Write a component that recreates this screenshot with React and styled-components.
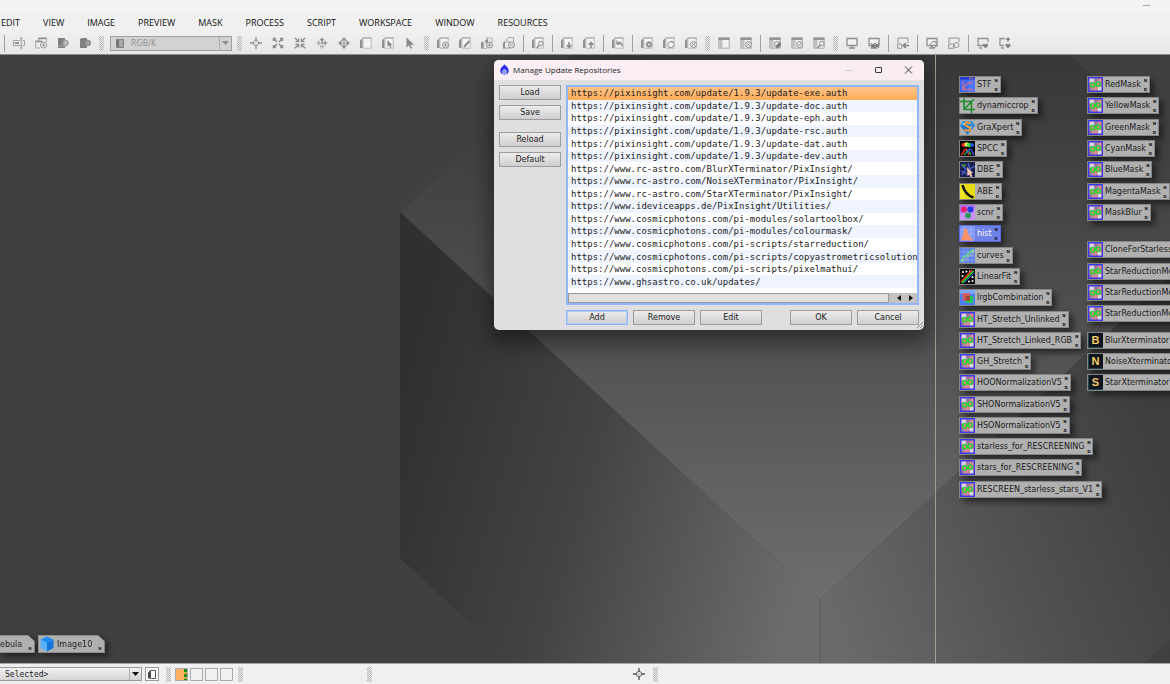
import React, { useState } from "react";
import styled, { createGlobalStyle, css } from "styled-components";

const GlobalStyle = createGlobalStyle`
  * {
    box-sizing: border-box;
  }

  html,
  body,
  #root {
    height: 100%;
    margin: 0;
  }

  body {
    font-family: "DejaVu Sans", Verdana, sans-serif;
    font-size: 8px;
    color: #1c1c1c;
    overflow: hidden;
  }

  button,
  select {
    font: inherit;
    color: inherit;
  }
`;

const AppShell = styled.div`
  display: flex;
  flex-direction: column;
  height: 100vh;
  background: #f0f0f0;
`;

const TitleStrip = styled.header`
  display: flex;
  justify-content: flex-end;
  height: 14px;
  padding-right: 18px;
  background: #f3f3f3;
`;

const MinimizeButton = styled.button`
  width: 12px;
  height: 12px;
  padding: 0;
  border: 0;
  background: none;

  svg {
    display: block;
  }
`;

const MenuBar = styled.nav`
  display: flex;
  align-items: center;
  gap: 23px;
  height: 18px;
  padding: 0 0 2px 1px;
  font-family: "Open Sans", "Segoe UI", sans-serif;
  font-size: 9px;
`;

const MenuButton = styled.button`
  padding: 0;
  border: 0;
  background: none;
  color: #111;
`;

const Toolbar = styled.div`
  display: flex;
  align-items: center;
  height: 23px;
  padding-left: 1px;
  border-bottom: 1px solid #8c8c8c;
  background: linear-gradient(#f0f0f0, #e6e6e6);
`;

const ToolButton = styled.button`
  display: flex;
  flex: none;
  align-items: center;
  justify-content: center;
  width: 22px;
  height: 18px;
  padding: 0;
  border: 0;
  background: none;
`;

const Divider = styled.span`
  flex: none;
  width: 1px;
  height: 17px;
  margin: 0 3px;
  background: #a2a2a2;
`;

const Handle = styled.span`
  flex: none;
  width: 5px;
  height: 15px;
  margin: 0 3px;
  background: repeating-conic-gradient(#b4b4b4 0 25%, #f0f0f0 0 50%) 0 0 / 2px 2px;
`;

const ChannelPicker = styled.label`
  display: flex;
  flex: none;
  align-items: center;
  gap: 7px;
  width: 122px;
  height: 15px;
  margin: 0 2px 0 3px;
  padding-left: 5px;
  border: 1px solid #a0a0a0;
  background: #d2d2d2;

  select {
    flex: 1;
    height: 13px;
    padding: 0;
    border: 0;
    appearance: none;
    background: none;
    color: #959595;
    opacity: 1;
  }
`;

const DropArrow = styled.span`
  display: flex;
  align-items: center;
  justify-content: center;
  width: 12px;
  height: 100%;
  border-left: 1px solid #b0b0b0;
  pointer-events: none;
`;

const Workspace = styled.main`
  position: relative;
  flex: 1;
  min-height: 0;
  overflow: hidden;
  background: #404040;
`;

const Backdrop = styled.svg`
  position: absolute;
  top: 0;
  left: 0;
`;

const ScreenEdge = styled.div`
  position: absolute;
  top: 0;
  bottom: 0;
  left: 935px;
  width: 1px;
  background: #a89c90;
`;

const ProcessIcon = styled.button`
  position: absolute;
  left: ${({ $x }) => $x}px;
  top: ${({ $y }) => $y}px;
  display: flex;
  align-items: center;
  gap: 2px;
  height: 17px;
  padding: 0 1px 0 0;
  border: 1px solid #868686;
  background: #b0b0b0;
  color: #1a1a1a;
  white-space: nowrap;
  box-shadow: 4px 4px 6px rgba(0, 0, 0, 0.5);

  > svg {
    flex: none;
  }

  ${({ $selected }) =>
    $selected &&
    css`
      border-color: #5a6ad8;
      background: #6f80e6;
      color: #fff;
    `}
`;

const Flags = styled.span`
  display: flex;
  flex-direction: column;
  justify-content: space-between;
  width: 5px;
  height: 14px;
  font-size: 4px;
  font-weight: bold;
  line-height: 5px;
  text-align: center;
  color: #111;
`;

const ImageIconShadow = styled.div`
  position: absolute;
  left: ${({ $x }) => $x}px;
  bottom: 10px;
  filter: drop-shadow(3px 3px 3px rgba(0, 0, 0, 0.5));
`;

const ImageIcon = styled.button`
  display: flex;
  align-items: center;
  gap: 3px;
  height: 18px;
  padding: 0 2px 0 ${({ $cut }) => ($cut ? 0 : 1)}px;
  border: 1px solid #8e8e8e;
  border-left-width: ${({ $cut }) => ($cut ? 0 : 1)}px;
  background: #b0b0b0;
  clip-path: polygon(0 0, calc(100% - 7px) 0, 100% 6px, 100% 100%, 0 100%);

  small {
    align-self: flex-end;
    margin-left: 3px;
    font-size: 4px;
    font-weight: bold;
    line-height: 6px;
  }
`;

const Dialog = styled.section`
  position: absolute;
  left: 494px;
  top: 5px;
  width: 430px;
  border-radius: 5px;
  overflow: hidden;
  background: #dfdfe1;
`;

const DialogShadow = styled(Dialog)`
  height: 270px;
  box-shadow: 0 10px 20px 4px rgba(0, 0, 0, 0.4);
`;

const DialogHeader = styled.header`
  display: flex;
  align-items: center;
  height: 20px;
  padding: 0 9px 1px 5px;
  background: linear-gradient(90deg, #fbeff5, #f9edf3);

  h1 {
    flex: 1;
    margin: 0 0 0 3px;
    font-family: "Open Sans", "Segoe UI", sans-serif;
    font-size: 8px;
    font-weight: normal;
    line-height: 10px;
  }
`;

const WindowControls = styled.div`
  display: flex;
  gap: 18px;

  button {
    width: 12px;
    height: 12px;
    padding: 0;
    border: 0;
    background: none;
  }

  svg {
    display: block;
  }
`;

const DialogBody = styled.div`
  display: flex;
  gap: 5px;
  padding: 5px 5px 4px;
`;

const SideButtons = styled.div`
  display: flex;
  flex: none;
  flex-direction: column;
  gap: 5px;
  width: 62px;
`;

const MainColumn = styled.div`
  display: flex;
  flex: 1;
  flex-direction: column;
  gap: 5px;
  min-width: 0;
`;

const PushButton = styled.button`
  width: 62px;
  height: 15px;
  margin-top: ${({ $spaced }) => ($spaced ? 7 : 0)}px;
  padding: 0;
  border: 1px solid ${({ $primary }) => ($primary ? "#8fb4f8" : "#9c9c9e")};
  background: linear-gradient(#ececec, #cfcfcf);
  line-height: 12px;
  box-shadow: ${({ $primary }) => ($primary ? "inset 0 0 0 1px #b4ccf8" : "none")};
`;

const ButtonRow = styled.div`
  display: flex;
  gap: 5px;
`;

const Spacer = styled.span`
  flex: 1;
`;

const ListPanel = styled.div`
  display: flex;
  flex-direction: column;
  height: 220px;
  border: 2px solid #92b6fa;
  background: #fff;
`;

const RepoList = styled.ul`
  display: flex;
  flex: 1;
  flex-direction: column;
  min-height: 0;
  margin: 0;
  padding: 0 0 5px;
  overflow: hidden;
  list-style: none;
  font-family: "DejaVu Sans Mono", monospace;
  font-size: 9px;
  line-height: 12px;
`;

const RepoItem = styled.li`
  display: flex;
  flex: 1;
  align-items: center;
  padding-left: 3px;
  white-space: nowrap;
  cursor: default;

  &:nth-child(even) {
    background: #eff4fe;
  }

  ${({ $selected }) =>
    $selected &&
    css`
      background: linear-gradient(#ffc488, #ffac58);
    `}
`;

const ScrollTrack = styled.div`
  display: flex;
  align-items: center;
  height: 10px;
  padding-right: 1px;
  background: #c2c2c2;
`;

const ScrollThumb = styled.span`
  flex: 1;
  height: 10px;
  margin-right: 5px;
  border: 1px solid #989898;
  background: #e0e0e0;
`;

const ScrollButton = styled.button`
  width: 11px;
  height: 10px;
  padding: 0;
  border: 0;
  background: none;

  svg {
    display: block;
    margin: auto;
  }
`;

const ResizeGrip = styled.svg`
  position: absolute;
  right: 1px;
  bottom: 1px;
`;

const StatusBar = styled.footer`
  display: flex;
  align-items: center;
  height: 21px;
  border-top: 1px solid #a8a8a8;
  background: #f0f0f0;
`;

const ViewPicker = styled.label`
  display: flex;
  align-items: center;
  width: 142px;
  height: 14px;
  border: 1px solid #9a9a9a;
  border-left: 0;
  background: linear-gradient(#f2f2f2, #d4d4d4);

  select {
    flex: 1;
    height: 12px;
    padding: 0 0 0 5px;
    border: 0;
    appearance: none;
    background: none;
    font-family: "DejaVu Sans Mono", monospace;
    font-size: 8px;
  }
`;

const PageButton = styled.button`
  display: flex;
  align-items: center;
  justify-content: center;
  width: 14px;
  height: 14px;
  margin: 0 4px 0 3px;
  padding: 0;
  border: 1px solid #9a9a9a;
  background: #fafafa;
`;

const Swatches = styled.div`
  display: flex;
  gap: 2px;
  margin: 0 2px 0 1px;
`;

const Swatch = styled.button`
  width: 13px;
  height: 13px;
  padding: 0;
  border: 1px solid #aaa;
  background: #f0f0f0;

  ${({ $active }) =>
    $active &&
    css`
      background: repeating-linear-gradient(#148c14 0 3px, #d8b040 3px 5px)
          right / 3px 100% no-repeat,
        #ffb060;
    `}
`;

const StatusGap = styled.div`
  width: ${({ $width }) => $width}px;
`;

const menus = [
  "EDIT",
  "VIEW",
  "IMAGE",
  "PREVIEW",
  "MASK",
  "PROCESS",
  "SCRIPT",
  "WORKSPACE",
  "WINDOW",
  "RESOURCES",
];

// "|" is a divider and ":" is a drag handle
const leftTools = ["|", "rename", "newWindow", "readout", "readoutAll", ":"];
const mainTools = [
  ":", "center", "expand", "shrink", "fitIn", "pan", "page", "pagePick", "pointer",
  ":", "page+add", "page+edit", "page2+add", "page2+minus",
  "|", "page+find", "|", "page+down", "page+up", "|", "page+undo",
  "|", "page+gear", "page+reload", "page+close",
  ":", "panel", "panel+close", "|", "panel+half", "panel+check", "panel+find",
  ":", "screen", "screenGrid", "|", "screenArrow", "|", "screen+reload", "screenSplit",
  "|", "screenHeart", "screenLock",
];

const repositories = [
  "https://pixinsight.com/update/1.9.3/update-exe.auth",
  "https://pixinsight.com/update/1.9.3/update-doc.auth",
  "https://pixinsight.com/update/1.9.3/update-eph.auth",
  "https://pixinsight.com/update/1.9.3/update-rsc.auth",
  "https://pixinsight.com/update/1.9.3/update-dat.auth",
  "https://pixinsight.com/update/1.9.3/update-dev.auth",
  "https://www.rc-astro.com/BlurXTerminator/PixInsight/",
  "https://www.rc-astro.com/NoiseXTerminator/PixInsight/",
  "https://www.rc-astro.com/StarXTerminator/PixInsight/",
  "https://www.ideviceapps.de/PixInsight/Utilities/",
  "https://www.cosmicphotons.com/pi-modules/solartoolbox/",
  "https://www.cosmicphotons.com/pi-modules/colourmask/",
  "https://www.cosmicphotons.com/pi-scripts/starreduction/",
  "https://www.cosmicphotons.com/pi-scripts/copyastrometricsolution/",
  "https://www.cosmicphotons.com/pi-scripts/pixelmathui/",
  "https://www.ghsastro.co.uk/updates/",
];

const processes = [
  { name: "STF", icon: "stf", x: 959, y: 21 },
  { name: "dynamiccrop", icon: "crop", x: 959, y: 42 },
  { name: "GraXpert", icon: "gem", x: 959, y: 64 },
  { name: "SPCC", icon: "spcc", x: 959, y: 85 },
  { name: "DBE", icon: "dbe", x: 959, y: 106 },
  { name: "ABE", icon: "abe", x: 959, y: 128 },
  { name: "scnr", icon: "scnr", x: 959, y: 149 },
  { name: "hist", icon: "hist", x: 959, y: 170, selected: true },
  { name: "curves", icon: "curves", x: 959, y: 192 },
  { name: "LinearFit", icon: "linear", x: 959, y: 213 },
  { name: "lrgbCombination", icon: "lrgb", x: 959, y: 234 },
  { name: "HT_Stretch_Unlinked", icon: "math", x: 959, y: 256 },
  { name: "HT_Stretch_Linked_RGB", icon: "math", x: 959, y: 277 },
  { name: "GH_Stretch", icon: "math", x: 959, y: 298 },
  { name: "HOONormalizationV5", icon: "math", x: 959, y: 319 },
  { name: "SHONormalizationV5", icon: "math", x: 959, y: 341 },
  { name: "HSONormalizationV5", icon: "math", x: 959, y: 362 },
  { name: "starless_for_RESCREENING", icon: "math", x: 959, y: 383 },
  { name: "stars_for_RESCREENING", icon: "math", x: 959, y: 404 },
  { name: "RESCREEN_starless_stars_V1", icon: "math", x: 959, y: 426 },
  { name: "RedMask", icon: "math", x: 1087, y: 21 },
  { name: "YellowMask", icon: "math", x: 1087, y: 42 },
  { name: "GreenMask", icon: "math", x: 1087, y: 64 },
  { name: "CyanMask", icon: "math", x: 1087, y: 85 },
  { name: "BlueMask", icon: "math", x: 1087, y: 106 },
  { name: "MagentaMask", icon: "math", x: 1087, y: 128 },
  { name: "MaskBlur", icon: "math", x: 1087, y: 149 },
  { name: "CloneForStarless", icon: "math", x: 1087, y: 186 },
  { name: "StarReductionMe", icon: "math", x: 1087, y: 208 },
  { name: "StarReductionMe", icon: "math", x: 1087, y: 229 },
  { name: "StarReductionMe", icon: "math", x: 1087, y: 250 },
  { name: "BlurXterminator", icon: "B", x: 1087, y: 277 },
  { name: "NoiseXterminator", icon: "N", x: 1087, y: 298 },
  { name: "StarXterminator", icon: "S", x: 1087, y: 319 },
];

const bases = {
  page: (
    <>
      <path d="M0 3.5 2.5 1v10H0z" fill="#8f8f8f" />
      <path d="M3 .8h8.2v10.4H3z" fill="#f4f4f4" stroke="#bcbcbc" />
      <path d="M2.5 1h9" stroke="#a4a4a4" />
    </>
  ),
  page2: (
    <>
      <path d="M0 6 2 4v7.5H0zM3.5 4.5 7 1v4L5 6z" fill="#8f8f8f" />
      <path d="M5 1h6v5M2.5 5v6.5H6" fill="none" stroke="#b0b0b0" />
    </>
  ),
  lock: (
    <>
      <path d="M0 6 2 5h5v6H0z" fill="#f0f0f0" stroke="#a8a8a8" />
      <path d="M0 6 2 4v7.5H0z" fill="#8f8f8f" />
      <path d="M4 4.5V2l1.500-1.500h5V5" fill="none" stroke="#a4a4a4" />
    </>
  ),
  panel: (
    <>
      <path d="M.8 1h10.4v10.2H.8z" fill="#f2f2f2" stroke="#ababab" />
      <path d="M.5.5h11V3H.5z" fill="#949494" />
      <path d="M1 3h3.5v8H1z" fill="#c0c0c0" />
    </>
  ),
  screen: (
    <>
      <path d="M1 1.5h10v7H1z" fill="#f4f4f4" stroke="#8f8f8f" strokeWidth="1.3" />
      <path d="M6 8.5v2.3M3 11h6" stroke="#8f8f8f" strokeWidth="1.3" />
    </>
  ),
};

const badges = {
  add: (
    <>
      <circle cx="8.5" cy="8" r="3" />
      <path d="M7 8h3M8.5 6.5v3" />
    </>
  ),
  minus: (
    <>
      <circle cx="8.5" cy="8" r="3" />
      <path d="M7 8h3" />
    </>
  ),
  close: (
    <>
      <circle cx="8.5" cy="7.5" r="3" />
      <path d="m7.3 6.3 2.4 2.4m0-2.4L7.3 8.7" />
    </>
  ),
  check: (
    <>
      <circle cx="8.5" cy="7.5" r="3" />
      <path d="m7 7.3 1.2 1.2L10.5 6" />
    </>
  ),
  half: (
    <>
      <circle cx="8.5" cy="7.5" r="3" />
      <path d="M10.8 5.2a3 3 0 0 1-4.4 4.4z" fill="#757575" />
    </>
  ),
  find: (
    <>
      <circle cx="8.8" cy="6.5" r="2.3" />
      <path d="M7 8.3 4.8 11" strokeWidth="1.5" />
    </>
  ),
  edit: <path d="M5 10 10.5 4" strokeWidth="2" />,
  down: <path d="M8 5v5M5.7 8 8 10.5 10.3 8" fill="none" strokeWidth="1.6" />,
  up: <path d="M8 11V6M5.7 8 8 5.5 10.3 8" fill="none" strokeWidth="1.6" />,
  undo: <path d="M5 3.500v3.500h3.500M5.200 6.800C7.500 4 10.500 5.500 10 9.500" fill="none" strokeWidth="1.3" />,
  gear: (
    <>
      <path d="M8 4v7M4.5 7.5h7M5.5 5l5 5m0-5-5 5" strokeWidth="1.1" />
      <circle cx="8" cy="7.5" r="1.8" strokeWidth="1.4" />
    </>
  ),
  reload: <path d="M10.8 7.5a3 3 0 1 1-1.3-2.4M9 3.5v2.2h2.2" fill="none" />,
};

const glyphs = {
  rename: (
    <>
      <path d="M7 3.5H.5v5H7M9.5 3.5h2v5h-2" fill="none" stroke="#a2a2a2" />
      <path d="M2 5.500h4M2 6.500h4M8.2 1v10M7 1h2.5M7 11h2.5" stroke="#929292" />
    </>
  ),
  newWindow: (
    <>
      <path d="M3.5 4V1h8v4M5 4H.7v7H5" fill="none" stroke="#a8a8a8" />
      <path d="M3 1.5h9M.5 4.5h7" stroke="#929292" strokeWidth="1.5" />
      <circle cx="8.5" cy="8" r="3" fill="#f0f0f0" stroke="#929292" />
      <path d="M7 8h3M8.5 6.5v3" stroke="#929292" />
    </>
  ),
  readout: (
    <>
      <path d="M1 1h7v10H1z" fill="#808080" />
      <circle cx="8.5" cy="6" r="2.8" fill="#b8b8b8" stroke="#969696" />
      <path d="M1 9h7" stroke="#a4a4a4" />
    </>
  ),
  readoutAll: (
    <>
      <path d="M1 2 3 1h5v10H1z" fill="#808080" />
      <circle cx="9" cy="6" r="2.8" fill="#9c9c9c" stroke="#8f8f8f" />
    </>
  ),
  center: (
    <g fill="none" stroke="#8f8f8f">
      <path d="M6 0v4M6 8v4M0 6h4M8 6h4" strokeWidth="1.4" />
      <circle cx="6" cy="6" r="2.6" strokeWidth=".9" />
      <path d="M5.500 6h1" />
    </g>
  ),
  expand: (
    <path
      d="M1.500 4V1.500H4M8 1.500h2.500V4M10.500 8v2.500H8M4 10.500H1.500V8M2 2l3 3m5-3L7 5m3 5L7 7m-5 3 3-3"
      fill="none"
      stroke="#8f8f8f"
      strokeWidth="1.6"
    />
  ),
  shrink: (
    <path
      d="M4.600 1.500v3.100H1.500M7.400 1.500v3.100h3.100M10.500 7.400H7.400v3.100M1.500 7.400h3.100v3.100M.800.800l3.500 3.500M11.200.800 7.700 4.300M11.200 11.200 7.700 7.700M.800 11.200l3.500-3.500"
      fill="none"
      stroke="#8f8f8f"
      strokeWidth="1.3"
    />
  ),
  fitIn: (
    <path
      d="M6 5 3.500 2H8.500zM6 7 3.500 10h5zM5 6 2 3.500v5zM7 6l3-2.500v5zM5.400.500h1.200v11H5.400zM.500 5.400h11v1.200H.500z"
      fill="#8f8f8f"
    />
  ),
  pan: (
    <>
      <path d="m6 0 2.500 3h-5zM6 12 3.500 9h5zM0 6l3-2.500v5zM12 6 9 3.500v5z" fill="#8f8f8f" />
      <path d="M6 2v8M2 6h8" stroke="#9c9c9c" />
      <path d="M3.500 3.500h5v5h-5z" fill="none" stroke="#a8a8a8" />
    </>
  ),
  pagePick: (
    <>
      {bases.page}
      <path d="M5.500 3v7l1.700-1.500L8.500 11l1-.5-1-2.300h2z" fill="#868686" />
    </>
  ),
  pointer: <path d="M2.500.500v10L5 8.300l1.500 3.400 1.600-.7-1.500-3.300H10z" fill="#8a8a8a" />,
  screenGrid: (
    <>
      {bases.screen}
      <path d="m3 6 4 5m0-5-4 5m4-5 4 5m0-5-4 5M3 8.500h8" stroke="#757575" strokeWidth="1.2" />
    </>
  ),
  screenArrow: (
    <>
      <path d="M1 6V1h10v5M.7 7h4v4.300h-4z" fill="none" stroke="#929292" />
      <path d="M12 8.500H7M8.800 6 6.300 8.500l2.500 2.500" fill="none" stroke="#808080" strokeWidth="1.600" />
    </>
  ),
  screenSplit: (
    <>
      <path d="M1 6V1h10v4M.7 7h5v4.300h-5z" fill="none" stroke="#929292" />
      <circle cx="8.500" cy="8" r="2.500" fill="#e8e8e8" stroke="#8f8f8f" />
    </>
  ),
  screenHeart: (
    <>
      <path d="M6 8.500H1v-7h10V5M2 11h3" fill="none" stroke="#929292" strokeWidth="1.300" />
      <path d="M8.500 11.500 5.700 8.500l1-2 1.800 1 1.800-1 1 2z" fill="#808080" />
    </>
  ),
  screenLock: (
    <>
      <path d="M5 8.500H1v-7h5M2 11h3" fill="none" stroke="#929292" strokeWidth="1.300" />
      <path d="m9 0 2.500 3H9.800v1.500H8.200V3H6.500zM9 11.500 6.200 8.500l1-2 1.800 1 1.800-1 1 2z" fill="#808080" />
    </>
  ),
};

function ToolGlyph({ name }) {
  const [base, badge] = name.split("+");
  return (
    <svg width="12" height="12" viewBox="0 0 12 12" aria-hidden="true">
      {glyphs[base] || bases[base]}
      {badge && (
        <g fill="#ececec" stroke="#8c8c8c">
          {badges[badge]}
        </g>
      )}
    </svg>
  );
}

function ToolGroup({ items }) {
  return items.map((item, i) => {
    if (item === "|") return <Divider key={i} />;
    if (item === ":") return <Handle key={i} />;
    return (
      <ToolButton key={i} type="button" aria-label={item}>
        <ToolGlyph name={item === "page2+minus" ? "lock+minus" : item} />
      </ToolButton>
    );
  });
}

const processArt = {
  stf: (
    <>
      <path d="M0 0h15v15H0z" fill="#4068f6" />
      <path d="M8 2h7v13H8z" fill="#5c84ff" opacity=".5" />
      <path d="M0 0h15v2.500H0z" fill="#2238c8" />
      <path d="M9 1.200h4" stroke="#f08060" strokeWidth="1.200" strokeDasharray="1.500 1" />
      <path d="M3 4v9M2 12.500h11M3.500 12C5 7 8 5.500 13 5" fill="none" stroke="#c8708c" strokeWidth="1.300" />
    </>
  ),
  crop: (
    <>
      <path d="M0 0h15v15H0z" fill="#b4b4b4" />
      <path d="M4 0v11.500h11M0 3.500h11.500V15M4 11.500 14 1" fill="none" stroke="#1e8c2c" strokeWidth="1.600" />
    </>
  ),
  gem: (
    <>
      <path d="M0 0h15v15H0z" fill="#b0b0b0" />
      <path d="M3 1h9l3 4.500L7.500 14.500 0 5.500z" fill="#2c94e0" />
      <path d="M0 5.500h15l-7.500 9z" fill="#1464b4" opacity=".6" />
      <path
        d="M10.300 3.700C9 1.500 5 1.800 5 4.300S10.300 6.300 10.300 8.800 6 11.300 4.700 9.300"
        fill="none"
        stroke="#f89c38"
        strokeWidth="2"
      />
      <path d="m3 5 1-2m7 5 1-2" stroke="#fff" strokeWidth=".8" />
    </>
  ),
  spcc: (
    <>
      <path d="M0 0h15v15H0z" fill="#050505" />
      <circle cx="3.500" cy="4" r="2" fill="#f02020" />
      <circle cx="6.500" cy="3.500" r="2.200" fill="#f8f060" />
      <circle cx="9" cy="4" r="2.200" fill="#30e040" />
      <circle cx="12.200" cy="4" r="2" fill="#2050f0" />
      <path d="M1 14c3-1 3-6 4.500-6S8 13 9 14" fill="none" stroke="#f03020" strokeWidth="1.500" />
      <path d="M4 14c2-1 3-5 4-5s2 4 3 5" fill="none" stroke="#20d040" strokeWidth="1.200" />
      <path d="M7 12c1-1 2-4 3.500-4s2 5 3.500 6" fill="none" stroke="#3050f0" strokeWidth="1.500" />
    </>
  ),
  dbe: (
    <>
      <path d="M0 0h15v15H0z" fill="#182050" />
      <path d="m1 3 5 4-4 6M8 1l2 6 5-3M1 9l8 4" stroke="#5064d0" strokeWidth="1.300" fill="none" />
      <path d="M2 2h4v3H2z" fill="#3c7858" />
      <path d="m7 5 6 6-2 .5 1.500 3-2 .5-1.200-2.600L7.500 14z" fill="#f8c8b4" />
    </>
  ),
  abe: (
    <>
      <path d="M0 0h15v15H0z" fill="#e8dc10" />
      <path d="M0 0h5v15H0z" fill="#f8f040" opacity=".5" />
      <path d="M2.500 1C4 7 7 11.500 13.500 13.500" fill="none" stroke="#141414" strokeWidth="2.600" />
    </>
  ),
  scnr: (
    <>
      <path d="M0 0h15v15H0z" fill="#b070f0" />
      <path d="M0 9 15 3v12H0z" fill="#d8a8f8" opacity=".6" />
      <circle cx="4" cy="4.500" r="3" fill="#e8206c" />
      <circle cx="10.500" cy="4.500" r="3" fill="#2438e8" />
      <circle cx="8" cy="10.500" r="3" fill="#2c9c58" />
    </>
  ),
  hist: (
    <>
      <path d="M0 0h15v15H0z" fill="#8098f4" />
      <path d="M0 4h15M0 8h15M4 0v15M11 0v15" stroke="#a8b8ff" strokeWidth=".7" />
      <path d="M.500 14.500C3 12 3.500 2 5.500 2S8 12 14.500 14.500z" fill="#f89468" />
    </>
  ),
  curves: (
    <>
      <path d="M0 0h15v15H0z" fill="#5c80e8" />
      <path d="M0 4h15M0 8h15M0 12h15M4 0v15M8 0v15M12 0v15" stroke="#90acf8" strokeWidth=".7" />
      <path d="M1 14C3 7 5 9 7 7s3-4 7-5" fill="none" stroke="#70e880" strokeWidth="1.300" />
      <path d="M1 13c6 0 5-4 8-5s4-2 5-6" fill="none" stroke="#b8d890" />
    </>
  ),
  linear: (
    <>
      <path d="M0 0h15v15H0z" fill="#080808" />
      <g fill="#fff">
        <circle cx="3" cy="3" r="1" />
        <circle cx="6.500" cy="2.500" r="1" />
        <circle cx="10" cy="2.500" r="1" />
        <circle cx="2.500" cy="7" r="1" />
        <circle cx="12.500" cy="8" r="1" />
        <circle cx="12.500" cy="12" r="1" />
        <circle cx="9" cy="12.500" r="1" />
      </g>
      <path d="M1 13 12 1" stroke="#f03020" strokeWidth="1.600" />
      <path d="M2 14 13.500 2" stroke="#20e030" strokeWidth="1.600" />
      <path d="M4 14 14 4" stroke="#2060f0" />
    </>
  ),
  lrgb: (
    <>
      <path d="M0 0h15v15H0z" fill="#4c7cf4" />
      <path d="M0 0h15v4H0z" fill="#78a8ff" />
      <path d="M5.500 6H13v7H5.500z" fill="#28c850" />
      <path d="M2.500 3H10v7.500H2.500z" fill="#d06060" />
      <path d="M5.500 6H10v4.500H5.500z" fill="#a04834" />
    </>
  ),
  math: (
    <>
      <path d="M.7.700h13.600v13.600H.700z" fill="#d08c94" />
      <path d="M1 1h5v4.500H1z" fill="#dcd0e4" />
      <path d="M6 1h4v4.500H6zM1 10h3v4H1z" fill="#98809c" />
      <path d="M10 10h3.500v4H10z" fill="#d8dcdc" />
      <path d="M.7.700h13.600v13.600H.700z" fill="none" stroke="#4038e0" strokeWidth="1.400" />
      <circle cx="4.600" cy="7.800" r="2.100" fill="none" stroke="#14dc24" strokeWidth="1.300" />
      <circle cx="10.200" cy="7.200" r="2.100" fill="none" stroke="#14dc24" strokeWidth="1.300" />
      <path d="m6.500 8.500 2-2" stroke="#14dc24" strokeWidth="1.200" />
    </>
  ),
};

function ProcessArt({ icon }) {
  if (icon.length === 1) {
    return (
      <svg width="15" height="15" viewBox="0 0 15 15" aria-hidden="true">
        <path d="M0 0h15v15H0z" fill="#10141c" />
        <path d="M0 14.500h15M.500 0v15" stroke="#204850" />
        <text
          x="7.500"
          y="10.500"
          fontFamily="Liberation Sans"
          fontSize="11"
          fontWeight="bold"
          fill="#f4cc68"
          textAnchor="middle"
        >
          {icon}
        </text>
      </svg>
    );
  }
  return (
    <svg width="15" height="15" viewBox="0 0 15 15" aria-hidden="true">
      {processArt[icon]}
    </svg>
  );
}

function CubeBackdrop() {
  return (
    <Backdrop width="1170" height="610" viewBox="0 55 1170 610" aria-hidden="true">
      <defs>
        <linearGradient id="topFace" gradientUnits="userSpaceOnUse" x1="0" y1="55" x2="0" y2="600">
          <stop offset="0" stopColor="#383838" />
          <stop offset="0.5" stopColor="#505050" />
          <stop offset="1" stopColor="#6e6e6e" />
        </linearGradient>
        <linearGradient id="leftFace" gradientUnits="userSpaceOnUse" x1="400" y1="400" x2="820" y2="520">
          <stop offset="0" stopColor="#303030" />
          <stop offset="0.45" stopColor="#434343" />
          <stop offset="1" stopColor="#6c6c6c" />
        </linearGradient>
        <linearGradient id="rightFace" gradientUnits="userSpaceOnUse" x1="820" y1="600" x2="1170" y2="460">
          <stop offset="0" stopColor="#6a6a6a" />
          <stop offset="0.5" stopColor="#525252" />
          <stop offset="1" stopColor="#3e3e3e" />
        </linearGradient>
      </defs>
      <path d="M400 212 571 55h499l100 92v129L820 600z" fill="url(#topFace)" />
      <path d="M400 212 820 600v65H514L400 558z" fill="url(#leftFace)" />
      <path d="m820 600 350-324v364l-28 25H820z" fill="url(#rightFace)" />
      <path d="M820 600v65" stroke="#5a5a5a" />
    </Backdrop>
  );
}

function DialogWindow() {
  const [selected, setSelected] = useState(0);

  return (
    <>
      <DialogShadow as="div" aria-hidden="true" />
      <Dialog role="dialog" aria-labelledby="dialog-title">
        <DialogHeader>
          <svg width="11" height="12" viewBox="0 0 11 12" aria-hidden="true">
            <path d="M5.500.500C7 2 10 4 9.700 7 9.500 9 8.500 10 7.500 10.500V6.500L5.500 5 3.500 6.500v4C2.500 10 1.500 9 1.300 7 1 4 4 2 5.500.500z" fill="#2c2cf0" />
            <path d="M5.500 5 7.500 6.500v3l-2 2-2-2v-3z" fill="#8c9cf8" />
          </svg>
          <h1 id="dialog-title">Manage Update Repositories</h1>
          <WindowControls>
            <button type="button" aria-label="Minimize">
              <svg width="12" height="12" viewBox="0 0 12 12">
                <path d="M2 6.500h7" stroke="#d0c8cc" />
              </svg>
            </button>
            <button type="button" aria-label="Maximize">
              <svg width="12" height="12" viewBox="0 0 12 12">
                <rect x="2.500" y="3.500" width="6" height="5" rx=".5" fill="none" stroke="#3a3a3a" />
              </svg>
            </button>
            <button type="button" aria-label="Close">
              <svg width="12" height="12" viewBox="0 0 12 12">
                <path d="m2 2.500 7 7m0-7-7 7" stroke="#3a3a3a" />
              </svg>
            </button>
          </WindowControls>
        </DialogHeader>
        <DialogBody>
          <SideButtons>
            <PushButton>Load</PushButton>
            <PushButton>Save</PushButton>
            <PushButton $spaced>Reload</PushButton>
            <PushButton>Default</PushButton>
          </SideButtons>
          <MainColumn>
            <ListPanel>
              <RepoList role="listbox" aria-label="Repositories">
                {repositories.map((url, i) => (
                  <RepoItem
                    key={url}
                    role="option"
                    aria-selected={i === selected}
                    $selected={i === selected}
                    onClick={() => setSelected(i)}
                  >
                    {url}
                  </RepoItem>
                ))}
              </RepoList>
              <ScrollTrack>
                <ScrollThumb />
                <ScrollButton type="button" aria-label="Scroll left">
                  <svg width="5" height="6" viewBox="0 0 5 6">
                    <path d="M4 0v6L0 3z" fill="#111" />
                  </svg>
                </ScrollButton>
                <ScrollButton type="button" aria-label="Scroll right">
                  <svg width="5" height="6" viewBox="0 0 5 6">
                    <path d="M1 0v6l4-3z" fill="#111" />
                  </svg>
                </ScrollButton>
              </ScrollTrack>
            </ListPanel>
            <ButtonRow>
              <PushButton $primary>Add</PushButton>
              <PushButton>Remove</PushButton>
              <PushButton>Edit</PushButton>
              <Spacer />
              <PushButton>OK</PushButton>
              <PushButton>Cancel</PushButton>
            </ButtonRow>
          </MainColumn>
        </DialogBody>
        <ResizeGrip width="6" height="6" viewBox="0 0 6 6" aria-hidden="true">
          <path d="M0 6 6 0M3 6l3-3" stroke="#909090" />
        </ResizeGrip>
      </Dialog>
    </>
  );
}

function App() {
  return (
    <AppShell>
      <GlobalStyle />
      <TitleStrip>
        <MinimizeButton type="button" aria-label="Minimize">
          <svg width="12" height="12" viewBox="0 0 12 12">
            <path d="M3 5.500h7" stroke="#a0a0a0" />
          </svg>
        </MinimizeButton>
      </TitleStrip>
      <MenuBar>
        {menus.map((menu) => (
          <MenuButton key={menu} type="button">
            {menu}
          </MenuButton>
        ))}
      </MenuBar>
      <Toolbar>
        <ToolGroup items={leftTools} />
        <ChannelPicker>
          <svg width="8" height="9" viewBox="0 0 8 9" aria-hidden="true">
            <path d="M.500.500h7v8h-7z" fill="#a8a8a8" stroke="#808080" />
            <path d="M1 1h2v7H1z" fill="#707070" />
          </svg>
          <select aria-label="Channel" disabled>
            <option>RGB/K</option>
          </select>
          <DropArrow>
            <svg width="7" height="4" viewBox="0 0 7 4">
              <path d="M0 0h7L3.500 4z" fill="#8c8c8c" />
            </svg>
          </DropArrow>
        </ChannelPicker>
        <ToolGroup items={mainTools} />
      </Toolbar>

      <Workspace>
        <CubeBackdrop />
        <ScreenEdge />
        {processes.map(({ name, icon, x, y, selected }) => (
          <ProcessIcon key={`${x}-${y}`} type="button" $x={x} $y={y} $selected={selected}>
            <ProcessArt icon={icon} />
            {name}
            <Flags>
              <span>N</span>
              <span>D</span>
            </Flags>
          </ProcessIcon>
        ))}
        <ImageIconShadow $x={0}>
          <ImageIcon type="button" $cut>
            ebula
            <small>N</small>
          </ImageIcon>
        </ImageIconShadow>
        <ImageIconShadow $x={38}>
          <ImageIcon type="button">
            <svg width="14" height="16" viewBox="0 0 14 16" aria-hidden="true">
              <path d="m7 .500 6.500 3.200L7 7 .500 3.700z" fill="#1c8cf8" />
              <path d="M.500 3.700 7 7v8.500L.500 12z" fill="#58b0fc" />
              <path d="M13.500 3.700 7 7v8.500l6.500-3.500z" fill="#1474d8" />
            </svg>
            Image10
            <small>N</small>
          </ImageIcon>
        </ImageIconShadow>
        <DialogWindow />
      </Workspace>

      <StatusBar>
        <ViewPicker>
          <select aria-label="View">
            <option>Selected&gt;</option>
          </select>
          <DropArrow>
            <svg width="7" height="4" viewBox="0 0 7 4">
              <path d="M0 0h7L3.500 4z" fill="#111" />
            </svg>
          </DropArrow>
        </ViewPicker>
        <PageButton type="button" aria-label="Page">
          <svg width="8" height="9" viewBox="0 0 8 9">
            <path d="M0 2.500 2 .500v8H0z" fill="#444" />
            <path d="M2.500.500h5v8h-5z" fill="#fff" stroke="#555" />
          </svg>
        </PageButton>
        <Handle />
        <Swatches>
          <Swatch type="button" aria-label="Workspace 1" $active />
          <Swatch type="button" aria-label="Workspace 2" />
          <Swatch type="button" aria-label="Workspace 3" />
          <Swatch type="button" aria-label="Workspace 4" />
        </Swatches>
        <Handle />
        <StatusGap $width={118} />
        <Handle />
        <StatusGap $width={253} />
        <ToolButton type="button" aria-label="Readout position">
          <svg width="12" height="12" viewBox="0 0 12 12">
            <g fill="none" stroke="#555">
              <path d="M6 0v4M6 8v4M0 6h4M8 6h4" strokeWidth="1.400" />
              <circle cx="6" cy="6" r="2.600" strokeWidth=".9" />
              <path d="M5.500 6h1" />
            </g>
          </svg>
        </ToolButton>
        <Handle />
      </StatusBar>
    </AppShell>
  );
}

export default App;
